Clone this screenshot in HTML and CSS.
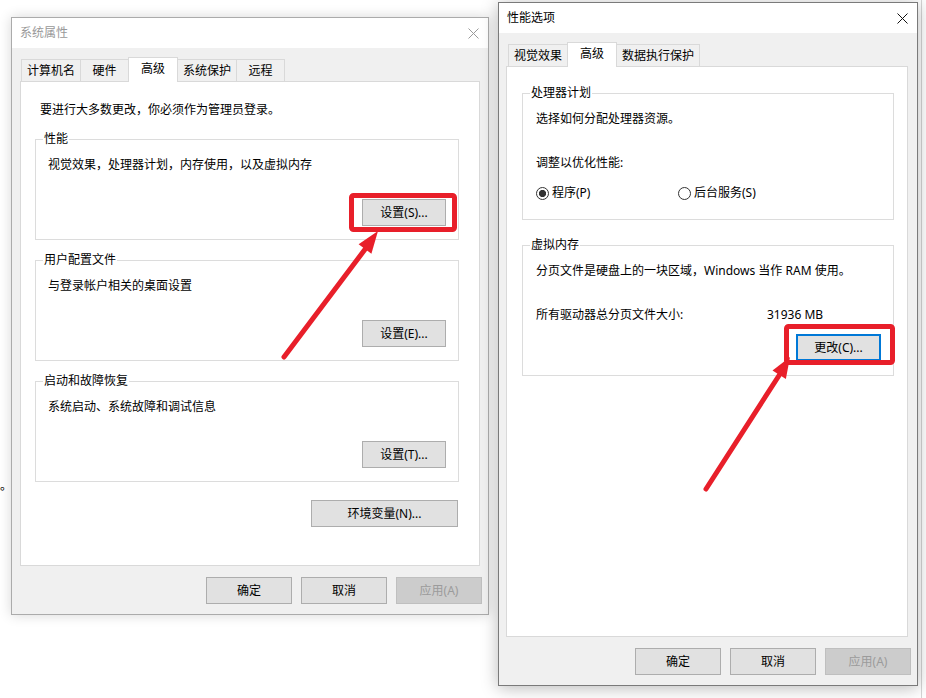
FILE: index.html
```html
<!DOCTYPE html>
<html lang="zh-CN">
<head>
    <meta charset="UTF-8">
    <title>系统属性</title>
    <link rel="stylesheet" href="styles.css">
</head>
<body>
<div class="desktop">
    <span class="stray">。</span>
    <div class="edge"></div>

    <!-- 系统属性 -->
    <div class="window sys-props inactive">
        <div class="titlebar">
            <span class="title">系统属性</span>
            <svg class="close" width="11" height="11" viewBox="0 0 11 11"><path d="M0.5 0.5L10.5 10.5M10.5 0.5L0.5 10.5" stroke="#9a9a9a" stroke-width="1"/></svg>
        </div>
        <div class="client">
            <div class="tabs">
                <div class="tab">计算机名</div>
                <div class="tab">硬件</div>
                <div class="tab active">高级</div>
                <div class="tab">系统保护</div>
                <div class="tab">远程</div>
            </div>
            <div class="panel">
                <p class="note">要进行大多数更改，你必须作为管理员登录。</p>

                <fieldset class="group">
                    <legend>性能</legend>
                    <div class="group-body">
                        <p class="group-text">视觉效果，处理器计划，内存使用，以及虚拟内存</p>
                        <div class="group-actions"><div class="btn">设置(S)...</div></div>
                    </div>
                </fieldset>

                <fieldset class="group">
                    <legend>用户配置文件</legend>
                    <div class="group-body">
                        <p class="group-text">与登录帐户相关的桌面设置</p>
                        <div class="group-actions"><div class="btn">设置(E)...</div></div>
                    </div>
                </fieldset>

                <fieldset class="group">
                    <legend>启动和故障恢复</legend>
                    <div class="group-body">
                        <p class="group-text">系统启动、系统故障和调试信息</p>
                        <div class="group-actions"><div class="btn">设置(T)...</div></div>
                    </div>
                </fieldset>

                <div class="btn env">环境变量(N)...</div>
            </div>
            <div class="footer">
                <div class="btn">确定</div>
                <div class="btn">取消</div>
                <div class="btn disabled">应用(A)</div>
            </div>
        </div>
    </div>

    <!-- 性能选项 -->
    <div class="window perf-opts">
        <div class="titlebar">
            <span class="title">性能选项</span>
            <svg class="close" width="11" height="11" viewBox="0 0 11 11"><path d="M0.5 0.5L10.5 10.5M10.5 0.5L0.5 10.5" stroke="#111" stroke-width="1"/></svg>
        </div>
        <div class="client">
            <div class="tabs">
                <div class="tab">视觉效果</div>
                <div class="tab active">高级</div>
                <div class="tab">数据执行保护</div>
            </div>
            <div class="panel">
                <fieldset class="group">
                    <legend>处理器计划</legend>
                    <div class="group-body">
                        <p class="line">选择如何分配处理器资源。</p>
                        <p class="line gap">调整以优化性能:</p>
                        <div class="radios">
                            <div class="radio"><span class="radio-mark checked"></span>程序(P)</div>
                            <div class="radio"><span class="radio-mark"></span>后台服务(S)</div>
                        </div>
                    </div>
                </fieldset>

                <fieldset class="group vm">
                    <legend>虚拟内存</legend>
                    <div class="group-body">
                        <p class="line">分页文件是硬盘上的一块区域，Windows 当作 RAM 使用。</p>
                        <div class="line gap size-row">
                            <span class="size-label">所有驱动器总分页文件大小:</span>
                            <span>31936 MB</span>
                        </div>
                        <div class="group-actions near"><div class="btn focus">更改(C)...</div></div>
                    </div>
                </fieldset>
            </div>
            <div class="footer">
                <div class="btn">确定</div>
                <div class="btn">取消</div>
                <div class="btn disabled">应用(A)</div>
            </div>
        </div>
    </div>

    <!-- 标注 -->
    <svg class="marks" width="926" height="698" viewBox="0 0 926 698">
        <g fill="none" stroke="#e81f2a" stroke-width="5">
            <rect x="351.5" y="195.5" width="103" height="34" rx="2"/>
            <rect x="786.5" y="326.5" width="106" height="36" rx="2"/>
            <line x1="284" y1="357" x2="366" y2="248" stroke-linecap="round"/>
            <line x1="706" y1="489" x2="780" y2="374" stroke-linecap="round"/>
        </g>
        <g fill="#e81f2a">
            <polygon points="378,231 371.4,253.8 358.6,244.2"/>
            <polygon points="790,357 785.9,379.1 772.5,370.5"/>
        </g>
    </svg>
</div>
</body>
</html>
```

FILE: styles.css
```css
body {
    margin: 0;
    background: #fff;
    font-family: "Noto Sans", "Noto Sans CJK SC", sans-serif;
    font-size: 12px;
    color: #000;
}

.desktop {
    position: relative;
    width: 926px;
    height: 698px;
    overflow: hidden;
}

.stray {
    position: absolute;
    left: 0;
    top: 478px;
    line-height: 16px;
}

.edge {
    position: absolute;
    left: 921px;
    top: 0;
    bottom: 0;
    width: 1px;
    background: #d6d6d6;
}

/* windows */
.window {
    position: absolute;
    box-sizing: border-box;
    display: flex;
    flex-direction: column;
    background: #f0f0f0;
    border: 1px solid #ababab;
    box-shadow: 0 0 12px rgba(0, 0, 0, 0.16);
}

.sys-props {
    left: 11px;
    top: 17px;
    width: 478px;
    height: 598px;
}

.perf-opts {
    left: 498px;
    top: 2px;
    width: 420px;
    height: 684px;
    border-color: #7a7a7a;
    box-shadow: 0 2px 16px rgba(0, 0, 0, 0.28);
}

.titlebar {
    height: 30px;
    background: #fff;
    display: flex;
    align-items: center;
    justify-content: space-between;
    padding: 0 9px 0 8px;
}

.title {
    line-height: 16px;
}

.inactive .title {
    color: #999;
}

.close {
    display: block;
}

.client {
    flex: 1;
    display: flex;
    flex-direction: column;
    padding-top: 9px;
}

/* tabs */
.tabs {
    display: flex;
    align-items: flex-end;
    height: 24px;
    padding-left: 9px;
}

.tab {
    box-sizing: border-box;
    height: 22px;
    min-width: 49px;
    padding: 1px 5px 0;
    margin-left: -1px;
    border: 1px solid #d9d9d9;
    border-bottom: none;
    background: #f0f0f0;
    line-height: 20px;
    text-align: center;
}

.tab:first-child {
    margin-left: 0;
}

.tab.active {
    position: relative;
    height: 25px;
    min-width: 50px;
    margin-bottom: -1px;
    padding-top: 1px;
    background: #fff;
}

.panel {
    flex: 1;
    display: flex;
    flex-direction: column;
    background: #fff;
    border: 1px solid #d9d9d9;
    margin: 0 8px;
    padding: 0 20px 0 14px;
}

.perf-opts .panel {
    margin: 0 9px 0 7px;
    padding: 0 13px 0 15px;
}

.note {
    margin: 20px 0 0 5px;
    line-height: 16px;
}

/* group boxes */
.group {
    margin: 13px 0 0;
    padding: 0 0 13px;
    border: 1px solid #dcdcdc;
    min-width: 0;
}

.group + .group {
    margin-top: 12px;
}

.group legend {
    margin-left: 7px;
    padding: 0 1px;
    line-height: 16px;
}

.group-body {
    padding: 0 12px;
}

.group-text {
    margin: 10px 0 0;
    line-height: 16px;
}

.group-actions {
    display: flex;
    justify-content: flex-end;
    margin-top: 26px;
}

.group-actions.near {
    margin-top: 11px;
}

.perf-opts .group {
    margin-top: 18px;
    padding-bottom: 18px;
}

.perf-opts .group.vm {
    margin-top: 17px;
    padding-bottom: 14px;
}

.perf-opts .group-body {
    padding: 0 12px 0 13px;
}

.line {
    margin: 10px 0 0;
    line-height: 16px;
}

.line.gap {
    margin-top: 28px;
}

.radios {
    display: flex;
    margin-top: 14px;
    line-height: 16px;
}

.radio {
    display: flex;
    align-items: center;
    gap: 3px;
}

.radio:first-child {
    width: 142px;
}

.radio-mark {
    box-sizing: border-box;
    width: 13px;
    height: 13px;
    border: 1px solid #333;
    border-radius: 50%;
    background: #fff;
}

.radio-mark.checked {
    background: radial-gradient(circle, #333 0 3.3px, #fff 3.9px);
}

.size-row {
    display: flex;
}

.size-label {
    width: 231px;
}

/* buttons */
.btn {
    box-sizing: border-box;
    width: 84px;
    height: 27px;
    display: flex;
    align-items: center;
    justify-content: center;
    background: #e1e1e1;
    border: 1px solid #adadad;
    line-height: 16px;
}

.btn.focus {
    width: 85px;
    border: 2px solid #0078d7;
}

.btn.disabled {
    background: #ccc;
    border-color: #bfbfbf;
    color: #9b9b9b;
}

.env {
    align-self: flex-end;
    width: 147px;
    margin: 18px 1px 0 0;
}

.footer {
    display: flex;
    justify-content: flex-end;
    gap: 9px;
    padding: 11px 6px 10px;
}

.footer .btn {
    width: 86px;
}

.marks {
    position: absolute;
    left: 0;
    top: 0;
    pointer-events: none;
}
```
